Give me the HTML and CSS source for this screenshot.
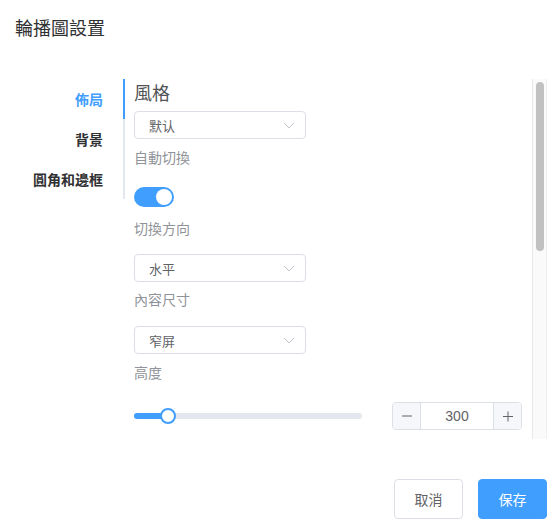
FILE: index.html
```html
<!DOCTYPE html>
<html lang="zh">
<head>
<meta charset="utf-8">
<title>輪播圖設置</title>
<link rel="stylesheet" href="styles.css">
</head>
<body>
<div class="dialog">
  <div class="header">輪播圖設置</div>
  <div class="body">
    <div class="tabs">
      <div class="tab active">佈局</div>
      <div class="tab">背景</div>
      <div class="tab">圓角和邊框</div>
    </div>
    <div class="pane">
      <div class="pane-content">
        <div class="heading">風格</div>
        <div class="select s-first"><span>默认</span><svg class="arrow" viewBox="0 0 12 7" width="12" height="7"><path d="M1 1l5 5 5-5" fill="none" stroke="#c0c4cc" stroke-width="1"/></svg></div>

        <div class="label l1">自動切換</div>
        <div class="switch t1"><span class="knob"></span></div>

        <div class="label l2">切換方向</div>
        <div class="select s2"><span>水平</span><svg class="arrow" viewBox="0 0 12 7" width="12" height="7"><path d="M1 1l5 5 5-5" fill="none" stroke="#c0c4cc" stroke-width="1"/></svg></div>

        <div class="label l3">內容尺寸</div>
        <div class="select s3"><span>窄屏</span><svg class="arrow" viewBox="0 0 12 7" width="12" height="7"><path d="M1 1l5 5 5-5" fill="none" stroke="#c0c4cc" stroke-width="1"/></svg></div>

        <div class="label l4">高度</div>
        <div class="slider-row r1">
          <div class="slider">
            <div class="track"><div class="fill" style="width:34px"></div></div>
            <div class="handle"></div>
          </div>
          <div class="number">
            <span class="btn"><svg viewBox="0 0 12 12" width="12" height="12"><path d="M1 6h10" stroke="#606266" stroke-width="1"/></svg></span>
            <span class="value">300</span>
            <span class="btn"><svg viewBox="0 0 12 12" width="12" height="12"><path d="M1 6.5h10M6 1.5v10" stroke="#606266" stroke-width="1"/></svg></span>
          </div>
        </div>
      </div>
      <div class="scrollbar"><div class="thumb"></div></div>
    </div>
  </div>
  <div class="footer">
    <button class="button">取消</button>
    <button class="button primary">保存</button>
  </div>
</div>
</body>
</html>
```

FILE: styles.css
```css
* { box-sizing: border-box; }
html, body { margin: 0; padding: 0; background: #fff; }
body {
  font-family: "Noto Sans CJK SC", "Noto Sans CJK TC", "Liberation Sans", sans-serif;
  color: #303133;
  width: 559px;
  height: 532px;
  overflow: hidden;
}
.dialog { width: 559px; }
.header {
  padding: 15px 15px 0;
  font-size: 18px;
  line-height: 24px;
  color: #303133;
}
.body {
  display: flex;
  margin-top: 40px;
  padding: 0 12px 0 15px;
  height: 360px;
}
.tabs {
  width: 110px;
  flex: none;
  align-self: flex-start;
  border-right: 2px solid #e4e7ed;
}
.tab {
  height: 40px;
  line-height: 40px;
  text-align: right;
  padding-right: 20px;
  font-size: 14px;
  font-weight: bold;
  color: #303133;
  margin-right: -2px;
  border-right: 2px solid transparent;
}
.tab.active { color: #409eff; border-right-color: #409eff; }
.pane {
  flex: 1;
  height: 360px;
  display: flex;
}
.pane-content {
  flex: 1;
  overflow: hidden;
  padding: 0 10px 0 9px;
}
.scrollbar {
  width: 15px;
  flex: none;
  height: 360px;
  background: #fafafa;
  border-left: 1px solid #e8e8e8;
  border-right: 1px solid #f0f0f0;
  padding: 3px 2px 0 3px;
}
.thumb {
  width: 8px;
  height: 169px;
  background: #c1c1c1;
  border-radius: 4px;
}
.heading {
  font-size: 18px;
  line-height: 26px;
  color: #505255;
  margin-bottom: 6px;
}
.select {
  width: 172px;
  height: 28px;
  border: 1px solid #dcdfe6;
  border-radius: 4px;
  display: flex;
  align-items: center;
  justify-content: space-between;
  padding: 0 10px 0 14px;
  font-size: 13px;
  color: #606266;
}
.select .arrow { display: block; }
.s2 { margin-top: 16px; }
.s3 { margin-top: 17px; }
.label {
  font-size: 14px;
  line-height: 20px;
  color: #909399;
}
.l1 { margin-top: 8px; }
.l2 { margin-top: 11px; }
.l3 { margin-top: 7px; }
.l4 { margin-top: 8px; }
.switch {
  width: 40px;
  height: 20px;
  border-radius: 10px;
  background: #409eff;
  display: flex;
  justify-content: flex-end;
  align-items: center;
  padding: 0 2px;
}
.t1 { margin-top: 20px; }
.knob {
  width: 16px;
  height: 16px;
  border-radius: 50%;
  background: #fff;
}
.slider-row {
  display: flex;
  align-items: center;
  justify-content: space-between;
  height: 28px;
}
.r1 { margin-top: 20px; }
.slider {
  width: 228px;
  height: 16px;
  display: flex;
  align-items: center;
}
.track {
  width: 228px;
  flex: none;
  height: 6px;
  border-radius: 3px;
  background: #e4e7ed;
  overflow: hidden;
}
.fill { height: 6px; background: #409eff; }
.handle {
  width: 16px;
  height: 16px;
  flex: none;
  border-radius: 50%;
  border: 2px solid #409eff;
  background: #fff;
  margin-left: -202px;
}
.number {
  width: 130px;
  height: 28px;
  border: 1px solid #dcdfe6;
  border-radius: 4px;
  display: flex;
  font-size: 14px;
  color: #606266;
  font-family: "Liberation Sans", "Noto Sans CJK SC", sans-serif;
}
.number .btn {
  width: 28px;
  flex: none;
  background: #f5f7fa;
  display: flex;
  align-items: center;
  justify-content: center;
}
.number .btn svg { display: block; }
.number .btn:first-child { border-right: 1px solid #dcdfe6; border-radius: 3px 0 0 3px; }
.number .btn:last-child { border-left: 1px solid #dcdfe6; border-radius: 0 3px 3px 0; }
.number .value {
  flex: 1;
  display: flex;
  align-items: center;
  justify-content: center;
}
.footer {
  display: flex;
  justify-content: flex-end;
  gap: 15px;
  padding: 40px 12px 0 0;
}
.button {
  width: 69px;
  height: 40px;
  border: 1px solid #dcdfe6;
  border-radius: 4px;
  background: #fff;
  color: #606266;
  font-family: "Noto Sans CJK SC", "Liberation Sans", sans-serif;
  font-size: 14px;
  padding: 0;
}
.button.primary {
  background: #409eff;
  border-color: #409eff;
  color: #fff;
}
```
